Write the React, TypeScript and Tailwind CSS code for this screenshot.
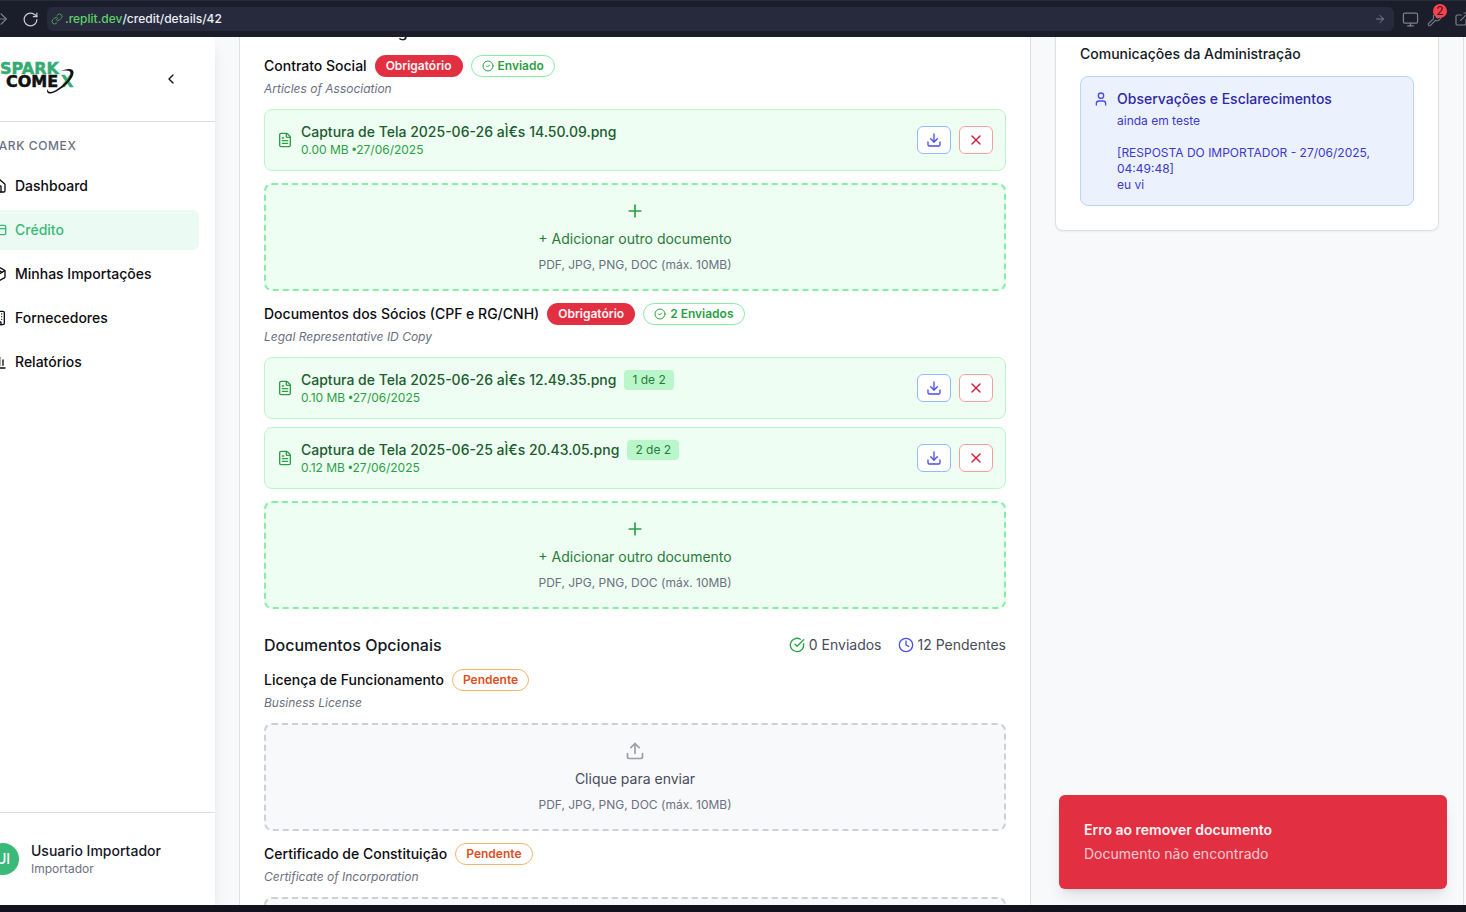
import type { ComponentType, ReactNode } from "react";
import {
  ArrowRight,
  Building,
  ChartColumn,
  ChevronLeft,
  CircleCheck,
  CircleCheckBig,
  Clock,
  CreditCard,
  Download,
  ExternalLink,
  FileText,
  House,
  Link,
  Monitor,
  Package,
  Plus,
  RotateCw,
  Upload,
  User,
  Wrench,
  X,
} from "lucide-react";

type StoredFile = { name: string; size: string; position?: string };

function BrowserBar() {
  return (
    <header className="z-20 flex h-[37px] shrink-0 items-center border-t border-[#262a3d] bg-[#1b1d2a] text-[#7d808c]">
      <button aria-label="Avançar" className="-ml-2 mr-3">
        <ArrowRight size={18} strokeWidth={1.5} />
      </button>
      <button aria-label="Recarregar" className="mr-2 text-[#c9cbd2]">
        <RotateCw size={17} strokeWidth={1.75} />
      </button>
      <div className="flex h-6 flex-1 items-center rounded-md bg-[#272a3c] px-1 text-xs">
        <Link size={12} strokeWidth={2} className="mr-0.5 text-[#4f9f57]" />
        <span className="font-medium text-[#5fd068]">.replit.dev</span>
        <span className="font-medium text-[#eceef3]">/credit/details/42</span>
        <ArrowRight size={12} className="ml-auto mr-1" />
      </div>
      <button aria-label="Monitor" className="ml-2">
        <Monitor size={17} strokeWidth={1.75} />
      </button>
      <button aria-label="Ferramentas, 2 avisos" className="relative ml-2">
        <Wrench size={15} strokeWidth={1.75} />
        <span className="absolute -top-2 left-1.5 flex size-3.5 items-center justify-center rounded-full bg-[#f8434f] text-xs leading-none text-[#4d0c14]">
          2
        </span>
      </button>
      <button aria-label="Abrir em nova aba" className="-mr-1 ml-3">
        <ExternalLink size={16} strokeWidth={1.75} />
      </button>
    </header>
  );
}

function Logo() {
  return (
    <svg viewBox="0 0 90 36" className="h-9 w-[90px]" role="img" aria-label="Spark Comex">
      <g fontFamily="'DejaVu Sans', sans-serif" fontWeight="700" fontSize="16" strokeWidth="0.5">
        <text x="9" y="13" fill="#35ab72" stroke="#35ab72">SPARK</text>
        <text x="15" y="26" fill="#111" stroke="#111">COME</text>
        <text x="70" y="26" fill="#35ab72" stroke="#35ab72">X</text>
      </g>
      <path
        d="M68 11C76 7 82 7 82.500 11C83 18 70 30 60 32.500C56.500 33 55.500 31 56 28C57 31 59 31.500 62 30.500C70 27 80 17 79.500 12C79 9 74 9 68 11Z"
        fill="#111"
      />
    </svg>
  );
}

type IconType = ComponentType<{ size?: number; className?: string }>;

const navItems: { label: string; icon: IconType; active?: boolean }[] = [
  { label: "Dashboard", icon: House },
  { label: "Crédito", icon: CreditCard, active: true },
  { label: "Minhas Importações", icon: Package },
  { label: "Fornecedores", icon: Building },
  { label: "Relatórios", icon: ChartColumn },
];

function Sidebar() {
  return (
    <aside className="z-10 -ml-[41px] flex w-64 shrink-0 flex-col bg-white shadow-lg">
      <div className="flex h-[85px] items-center justify-between border-b border-[#dddee0] pl-8 pr-9">
        <Logo />
        <button aria-label="Recolher menu" className="text-[#111]">
          <ChevronLeft size={16} />
        </button>
      </div>
      <nav className="flex-1 px-4 pt-4">
        <h2 className="mb-3 px-2 text-xs leading-4 font-medium tracking-wider text-[#6b7080]">SPARK COMEX</h2>
        <ul className="space-y-1">
          {navItems.map(({ label, icon: Icon, active }) => (
            <li key={label}>
              <a
                href="#"
                className={
                  "flex h-10 items-center gap-2 rounded-md px-4 text-sm font-medium " +
                  (active ? "bg-[#ebfaf3] text-[#3bb978]" : "text-[#0c0c0f]")
                }
              >
                <Icon size={16} />
                {label}
              </a>
            </li>
          ))}
        </ul>
      </nav>
      <div className="flex h-[93px] items-center gap-3 border-t border-[#dddee0] px-7">
        <span className="flex size-8 items-center justify-center rounded-full bg-[#3bb978] text-sm font-medium text-white">
          UI
        </span>
        <div>
          <p className="text-sm font-medium text-[#141824]">Usuario Importador</p>
          <p className="text-xs text-[#6b7080]">Importador</p>
        </div>
      </div>
    </aside>
  );
}

const badgeTones = {
  required: "border-transparent bg-[#e22f41] text-[#fdf3f4]",
  sent: "border-[#86efa5] text-[#2c9f45]",
  pending: "border-[#f7b56c] text-[#dd4f22]",
};

function Badge({ tone, children }: { tone: keyof typeof badgeTones; children: ReactNode }) {
  return (
    <span className={"inline-flex items-center gap-1 rounded-full border px-2.5 py-0.5 text-xs font-semibold " + badgeTones[tone]}>
      {tone === "sent" && <CircleCheck size={12} />}
      {children}
    </span>
  );
}

function FileRow({ file }: { file: StoredFile }) {
  return (
    <li className="flex items-center gap-2 rounded-lg border border-[#b9f7ca] bg-[#eefef3] p-3">
      <FileText size={16} className="text-[#2c9f45]" />
      <div className="flex-1">
        <div className="flex items-center gap-2">
          <span className="text-sm font-medium text-[#205c2e]">{file.name}</span>
          {file.position && (
            <span className="rounded bg-[#b9f7ca] px-2 py-0.5 text-xs text-[#2a7a3a]">{file.position}</span>
          )}
        </div>
        <p className="text-xs text-[#2c9f45]">
          {file.size} <span className="font-['Liberation_Sans',sans-serif]">•</span>27/06/2025
        </p>
      </div>
      <button aria-label={"Baixar " + file.name} className="flex h-7 items-center rounded-md border border-[#93bcfb] bg-white px-2 text-[#4a4ee8]">
        <Download size={16} />
      </button>
      <button aria-label={"Remover " + file.name} className="flex h-7 items-center rounded-md border border-[#f5a0a0] bg-white px-2 text-[#cc1f3a]">
        <X size={16} />
      </button>
    </li>
  );
}

function DropZone({ filled }: { filled: boolean }) {
  const Icon = filled ? Plus : Upload;
  return (
    <button
      className={
        "flex w-full flex-col items-center gap-2 rounded-lg border-2 border-dashed p-4 " +
        (filled ? "border-[#86efa5] bg-[#eefef3]" : "border-[#cdd0d6] bg-[#f8f9fb]")
      }
    >
      <Icon size={20} className={filled ? "text-[#2c9f45]" : "text-[#9a9dab]"} />
      <span className={"text-sm " + (filled ? "text-[#297c39]" : "text-[#474c5a]")}>
        {filled ? "+ Adicionar outro documento" : "Clique para enviar"}
      </span>
      <span className="text-xs text-[#6b7080]">PDF, JPG, PNG, DOC (máx. 10MB)</span>
    </button>
  );
}

type DocumentProps = { title: string; subtitle: string; sent?: string; files?: StoredFile[] };

function DocumentItem({ title, subtitle, sent, files }: DocumentProps) {
  return (
    <article className="space-y-3">
      <div className="space-y-1">
        <div className="flex items-center gap-2">
          <h4 className="text-sm font-medium text-[#0c0c0f]">{title}</h4>
          {sent ? (
            <>
              <Badge tone="required">Obrigatório</Badge>
              <Badge tone="sent">{sent}</Badge>
            </>
          ) : (
            <Badge tone="pending">Pendente</Badge>
          )}
        </div>
        <p className="text-xs text-[#6b7080] italic">{subtitle}</p>
      </div>
      {files && (
        <ul className="space-y-2">
          {files.map((file) => (
            <FileRow key={file.name} file={file} />
          ))}
        </ul>
      )}
      <DropZone filled={!!files} />
    </article>
  );
}

function Documents() {
  return (
    <div className="col-span-2 space-y-6 border-x border-[#dfe0e3] bg-white px-6">
      <section className="space-y-3">
        <h3 className="text-base font-medium text-[#141824]">Documentos Obrigatórios</h3>
        <DocumentItem
          title="Contrato Social"
          subtitle="Articles of Association"
          sent="Enviado"
          files={[{ name: "Captura de Tela 2025-06-26 aÌ€s 14.50.09.png", size: "0.00 MB" }]}
        />
        <DocumentItem
          title="Documentos dos Sócios (CPF e RG/CNH)"
          subtitle="Legal Representative ID Copy"
          sent="2 Enviados"
          files={[
            { name: "Captura de Tela 2025-06-26 aÌ€s 12.49.35.png", size: "0.10 MB", position: "1 de 2" },
            { name: "Captura de Tela 2025-06-25 aÌ€s 20.43.05.png", size: "0.12 MB", position: "2 de 2" },
          ]}
        />
      </section>
      <section className="space-y-3">
        <div className="flex items-center justify-between">
          <h3 className="text-base font-medium text-[#141824]">Documentos Opcionais</h3>
          <div className="flex gap-4 text-sm text-[#474c5a]">
            <span className="flex items-center gap-1">
              <CircleCheckBig size={16} className="text-[#2c9f45]" />0 Enviados
            </span>
            <span className="flex items-center gap-1">
              <Clock size={16} className="text-[#4a4ee8]" />
              12 Pendentes
            </span>
          </div>
        </div>
        <DocumentItem title="Licença de Funcionamento" subtitle="Business License" />
        <DocumentItem title="Certificado de Constituição" subtitle="Certificate of Incorporation" />
      </section>
    </div>
  );
}

function AdminMessages() {
  return (
    <section className="self-start rounded-b-lg border border-t-0 border-[#dfe0e3] bg-white px-6 pt-[25px] pb-6 shadow-xs">
      <h3 className="mb-3 text-sm font-medium text-[#141824]">Comunicações da Administração</h3>
      <div className="flex items-start gap-2 rounded-lg border border-[#bcd4fc] bg-[#ebf2fe] p-3">
        <User size={16} className="mt-0.5 shrink-0 text-[#4a4ee8]" />
        <div>
          <h4 className="mb-1 text-sm font-medium text-[#2f28a3]">Observações e Esclarecimentos</h4>
          <p className="text-xs whitespace-pre-line text-[#4038cb]">
            {"ainda em teste\n\n[RESPOSTA DO IMPORTADOR - 27/06/2025, 04:49:48]\neu vi"}
          </p>
        </div>
      </div>
    </section>
  );
}

function Toast() {
  return (
    <div role="alert" className="absolute right-[19px] bottom-4 w-[388px] rounded-md bg-[#e22f41] p-[25px] text-sm shadow-lg">
      <p className="mb-1 font-semibold text-[#fdf3f4]">Erro ao remover documento</p>
      <p className="text-[#f9ccd1]">Documento não encontrado</p>
    </div>
  );
}

export default function App() {
  return (
    <div className="flex h-screen flex-col overflow-hidden bg-[#12131f] pb-[7px] font-[Inter,sans-serif]">
      <BrowserBar />
      <div className="relative flex min-h-0 flex-1 overflow-hidden bg-[#fafafa]">
        <Sidebar />
        <main className="mr-0.5 min-w-0 flex-1 overflow-hidden border-r border-[#dfe0e3] bg-[#f8f9fb] px-6">
          <div className="-mt-[18px] grid grid-cols-3 gap-6">
            <Documents />
            <AdminMessages />
          </div>
        </main>
        <Toast />
      </div>
    </div>
  );
}
